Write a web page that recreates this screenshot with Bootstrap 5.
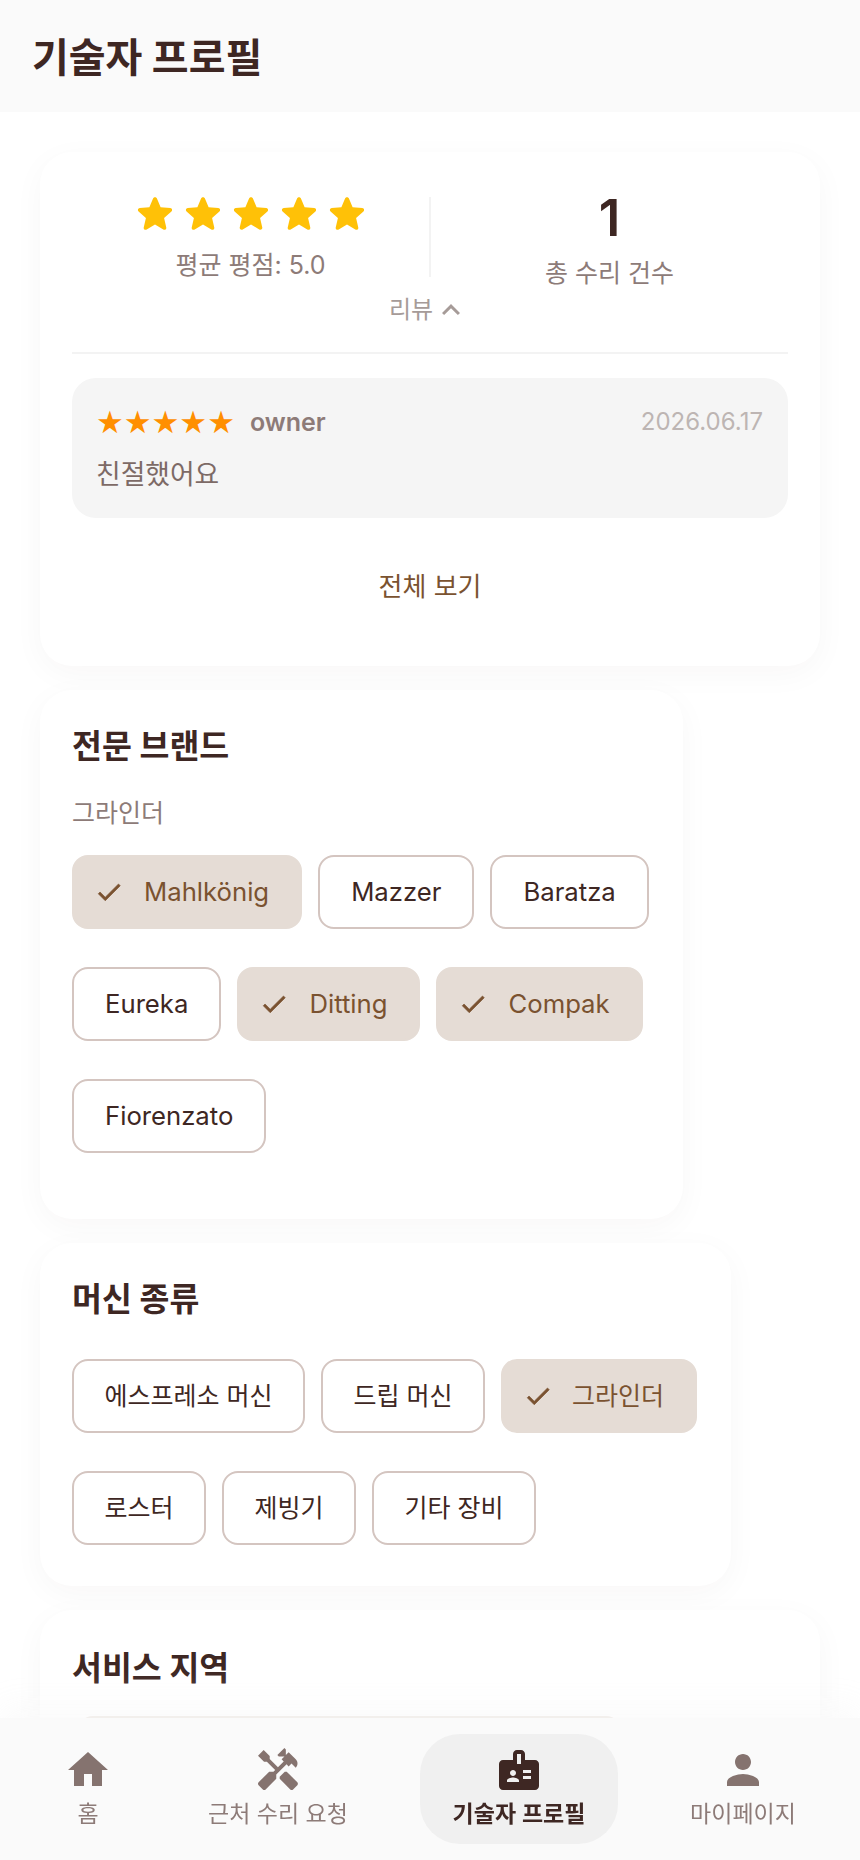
<!DOCTYPE html>
<html lang="ko">
<head>
<meta charset="utf-8">
<title>기술자 프로필</title>
<link href="https://cdn.jsdelivr.net/npm/bootstrap@5.3.0/dist/css/bootstrap.min.css" rel="stylesheet">
<style>
html,body{height:1860px;overflow:hidden;background:#fff;}
body{font-family:"Inter","Noto Sans CJK KR",sans-serif;color:#3e2723;}
.top-bar{height:112px;background:#fafafa;padding-left:32px;padding-top:4px;}
.top-title{font-size:40px;font-weight:700;margin:0;line-height:1;letter-spacing:0;}
.page-body{padding:40px 40px 0;}
.panel{border-radius:32px;background:#fff;box-shadow:0 8px 32px rgba(62,39,35,.035);padding:37px 32px 32px;margin-bottom:24px;}
.panel-a{width:780px;height:514px;padding-top:45px;}
.panel-b{width:643px;height:529px;padding-right:10px;}
.panel-c{width:691px;height:343px;padding-right:20px;}
.panel-d{width:780px;height:300px;padding-top:39px;}
.summary-row{height:80px;}
.summary-col{width:357px;}
.star-row{height:48px;margin-top:-7px;}
.star-row svg{width:48px;height:48px;fill:#ffc107;display:block;}
.muted-label{font-size:25px;color:#8d7b78;line-height:32px;}
.label-gap-a{margin-top:11px;}
.label-gap-b{margin-top:13px;}
.big-num{font-size:51px;font-weight:600;line-height:52px;margin-top:-5px;}
.v-rule{width:2px;height:80px;background:#f3f3f3;}
.toggle-line{font-size:24px;color:#a69b98;line-height:36px;margin-top:15px;margin-right:11px;}
.toggle-line svg{width:36px;height:36px;fill:#a69b98;margin-left:-4px;margin-right:-9px;}
.h-rule{height:2px;background:#f3f3f3;margin:24px 0 24px;}
.review-box{background:#f5f5f5;border-radius:24px;height:140px;padding:28px 24px 0;}
.review-stars{color:#ff8f00;font-size:31px;line-height:30px;letter-spacing:0;font-family:"DejaVu Sans",sans-serif;}
.review-name{font-size:25px;font-weight:600;color:#8d7b78;margin-left:15px;line-height:32px;}
.review-date{font-size:24px;color:#bdb5b3;line-height:32px;margin-right:1px;}
.review-text{font-size:26.8px;color:#7d6a66;line-height:32px;margin-top:20px;}
.see-all{font-size:26px;color:#7a5230;line-height:36px;margin-top:51px;}
.panel-title{font-size:32.5px;font-weight:700;line-height:40px;margin:0;}
.sub-label{font-size:25px;color:#8d7b78;line-height:32px;margin:30px 0 26px;}
.chips{display:flex;flex-wrap:wrap;column-gap:16px;row-gap:38px;}
.chip-item{height:74px;border:2px solid #d4c5c0;border-radius:16px;padding:0 31px;font-size:25.7px;color:#3e2723;background:#fff;line-height:1;display:flex;align-items:center;}
.chip-item:hover{color:#3e2723;border-color:#d4c5c0;background:#fff;}
.chip-on,.chip-on:hover{background:#e5dcd5;border-color:#e5dcd5;color:#7a5230;padding:0 31px 0 20px;}
.chip-on svg{width:30px;height:30px;fill:#7a5230;stroke:#7a5230;stroke-width:.5;margin-right:20px;}
.chips-top{margin-top:39px;}
.chips-top .chip-item{font-size:25px;padding:0 30.5px;}
.chips-top .chip-on{padding:0 31px 0 20px;}
.chips-top .chip-on svg{margin-right:19px;}
.area-box{height:100px;margin:27px 166px 0 5px;border:2px solid #e5dcd5;border-radius:16px;}
.bottom-nav{position:fixed;left:0;right:0;bottom:0;height:142px;background:#fafafa;box-shadow:0 -10px 32px rgba(250,250,250,.9);}
.nav-cell{position:absolute;top:16px;height:110px;display:flex;flex-direction:column;align-items:center;font-size:23px;color:#8d7b78;line-height:30px;padding-top:12px;}
.nav-cell svg{width:48px;height:48px;fill:#85736f;display:block;margin-bottom:5px;}
.cell-home{left:48px;width:80px;}
.cell-fix{left:178px;width:200px;}
.cell-pro{left:420px;width:198px;background:#f0f0f0;border-radius:40px;color:#3e2723;font-weight:600;}
.cell-pro svg{fill:#3e2723;}
.cell-me{left:668px;width:150px;}
</style>
</head>
<body>
<header class="top-bar d-flex align-items-center"><h1 class="top-title">기술자 프로필</h1></header>
<main class="page-body">
  <section class="card border-0 panel panel-a">
    <div class="d-flex summary-row">
      <div class="summary-col text-center">
        <div class="d-flex justify-content-center star-row">
          <svg viewBox="0 0 24 24"><path d="M12 17.27l4.15 2.51c.76.46 1.69-.22 1.49-1.08l-1.1-4.72 3.67-3.18c.67-.58.31-1.68-.57-1.75l-4.83-.41-1.89-4.46c-.34-.81-1.5-.81-1.84 0L9.19 8.63l-4.83.41c-.88.07-1.24 1.17-.57 1.75l3.67 3.18-1.1 4.72c-.2.86.73 1.54 1.49 1.08l4.15-2.5z"/></svg>
          <svg viewBox="0 0 24 24"><path d="M12 17.27l4.15 2.51c.76.46 1.69-.22 1.49-1.08l-1.1-4.72 3.67-3.18c.67-.58.31-1.68-.57-1.75l-4.83-.41-1.89-4.46c-.34-.81-1.5-.81-1.84 0L9.19 8.63l-4.83.41c-.88.07-1.24 1.17-.57 1.75l3.67 3.18-1.1 4.72c-.2.86.73 1.54 1.49 1.08l4.15-2.5z"/></svg>
          <svg viewBox="0 0 24 24"><path d="M12 17.27l4.15 2.51c.76.46 1.69-.22 1.49-1.08l-1.1-4.72 3.67-3.18c.67-.58.31-1.68-.57-1.75l-4.83-.41-1.89-4.46c-.34-.81-1.5-.81-1.84 0L9.19 8.63l-4.83.41c-.88.07-1.24 1.17-.57 1.75l3.67 3.18-1.1 4.72c-.2.86.73 1.54 1.49 1.08l4.15-2.5z"/></svg>
          <svg viewBox="0 0 24 24"><path d="M12 17.27l4.15 2.51c.76.46 1.69-.22 1.49-1.08l-1.1-4.72 3.67-3.18c.67-.58.31-1.68-.57-1.75l-4.83-.41-1.89-4.46c-.34-.81-1.5-.81-1.84 0L9.19 8.63l-4.83.41c-.88.07-1.24 1.17-.57 1.75l3.67 3.18-1.1 4.72c-.2.86.73 1.54 1.49 1.08l4.15-2.5z"/></svg>
          <svg viewBox="0 0 24 24"><path d="M12 17.27l4.15 2.51c.76.46 1.69-.22 1.49-1.08l-1.1-4.72 3.67-3.18c.67-.58.31-1.68-.57-1.75l-4.83-.41-1.89-4.46c-.34-.81-1.5-.81-1.84 0L9.19 8.63l-4.83.41c-.88.07-1.24 1.17-.57 1.75l3.67 3.18-1.1 4.72c-.2.86.73 1.54 1.49 1.08l4.15-2.5z"/></svg>
        </div>
        <div class="muted-label label-gap-a">평균 평점: 5.0</div>
      </div>
      <div class="v-rule"></div>
      <div class="summary-col text-center">
        <div class="big-num">1</div>
        <div class="muted-label label-gap-b">총 수리 건수</div>
      </div>
    </div>
    <div class="toggle-line d-flex justify-content-center align-items-center gap-1">리뷰
      <svg viewBox="0 0 24 24"><path d="M12 8l-6 6 1.41 1.41L12 10.83l4.59 4.58L18 14z"/></svg></div>
    <div class="h-rule"></div>
    <div class="review-box">
      <div class="d-flex align-items-center justify-content-between">
        <div class="d-flex align-items-center"><span class="review-stars">★★★★★</span><span class="review-name">owner</span></div>
        <span class="review-date">2026.06.17</span>
      </div>
      <div class="review-text">친절했어요</div>
    </div>
    <div class="see-all text-center">전체 보기</div>
  </section>

  <section class="card border-0 panel panel-b">
    <h2 class="panel-title">전문 브랜드</h2>
    <div class="sub-label">그라인더</div>
    <div class="chips">
      <button class="btn chip-item chip-on"><svg viewBox="0 0 24 24"><path d="M9 16.17L4.83 12l-1.42 1.41L9 19 21 7l-1.41-1.41z"/></svg>Mahlkönig</button>
      <button class="btn chip-item">Mazzer</button>
      <button class="btn chip-item">Baratza</button>
      <button class="btn chip-item">Eureka</button>
      <button class="btn chip-item chip-on"><svg viewBox="0 0 24 24"><path d="M9 16.17L4.83 12l-1.42 1.41L9 19 21 7l-1.41-1.41z"/></svg>Ditting</button>
      <button class="btn chip-item chip-on"><svg viewBox="0 0 24 24"><path d="M9 16.17L4.83 12l-1.42 1.41L9 19 21 7l-1.41-1.41z"/></svg>Compak</button>
      <button class="btn chip-item">Fiorenzato</button>
    </div>
  </section>

  <section class="card border-0 panel panel-c">
    <h2 class="panel-title">머신 종류</h2>
    <div class="chips chips-top">
      <button class="btn chip-item">에스프레소 머신</button>
      <button class="btn chip-item">드립 머신</button>
      <button class="btn chip-item chip-on"><svg viewBox="0 0 24 24"><path d="M9 16.17L4.83 12l-1.42 1.41L9 19 21 7l-1.41-1.41z"/></svg>그라인더</button>
      <button class="btn chip-item">로스터</button>
      <button class="btn chip-item">제빙기</button>
      <button class="btn chip-item">기타 장비</button>
    </div>
  </section>

  <section class="card border-0 panel panel-d">
    <h2 class="panel-title">서비스 지역</h2>
    <div class="area-box"></div>
  </section>
</main>
<nav class="bottom-nav">
  <div class="nav-cell cell-home"><svg viewBox="0 0 24 24"><path d="M10 20v-6h4v6h5v-8h3L12 3 2 12h3v8z"/></svg>홈</div>
  <div class="nav-cell cell-fix"><svg viewBox="0 0 24 24"><path d="M21.67 18.17l-5.3-5.3h-.99l-2.54 2.54v.99l5.3 5.3c.39.39 1.02.39 1.41 0l2.12-2.12c.39-.38.39-1.02 0-1.41z"/><path d="M17.34 10.19l1.41-1.41 2.12 2.12c1.17-1.17 1.17-3.07 0-4.24l-3.54-3.54-1.41 1.41V1.71l-.7-.71-3.54 3.54.71.71h2.83l-1.41 1.41 1.06 1.06-2.89 2.89-4.13-4.13V5.06L4.83 2.04 2 4.87 5.03 7.9h1.41l4.13 4.13-.85.85H7.6l-5.3 5.3c-.39.39-.39 1.02 0 1.41l2.12 2.12c.39.39 1.02.39 1.41 0l5.3-5.3v-2.12l5.15-5.15 1.06 1.05z"/></svg>근처 수리 요청</div>
  <div class="nav-cell cell-pro"><svg viewBox="0 0 24 24"><path d="M20 7h-5V4c0-1.1-.9-2-2-2h-2c-1.1 0-2 .9-2 2v3H4c-1.1 0-2 .9-2 2v11c0 1.1.9 2 2 2h16c1.1 0 2-.9 2-2V9c0-1.1-.9-2-2-2zM9 12c.83 0 1.5.67 1.5 1.5S9.83 15 9 15s-1.5-.67-1.5-1.5S8.17 12 9 12zm3 6H6v-.75c0-1 2-1.5 3-1.5s3 .5 3 1.5V18zm1-9h-2V4h2v5zm5 7.5h-4V15h4v1.5zm0-3h-4V12h4v1.5z"/></svg>기술자 프로필</div>
  <div class="nav-cell cell-me"><svg viewBox="0 0 24 24"><path d="M12 12c2.21 0 4-1.79 4-4s-1.79-4-4-4-4 1.79-4 4 1.79 4 4 4zm0 2c-2.67 0-8 1.34-8 4v2h16v-2c0-2.66-5.33-4-8-4z"/></svg>마이페이지</div>
</nav>
<script src="https://cdn.jsdelivr.net/npm/bootstrap@5.3.0/dist/js/bootstrap.bundle.min.js"></script>
</body>
</html>
